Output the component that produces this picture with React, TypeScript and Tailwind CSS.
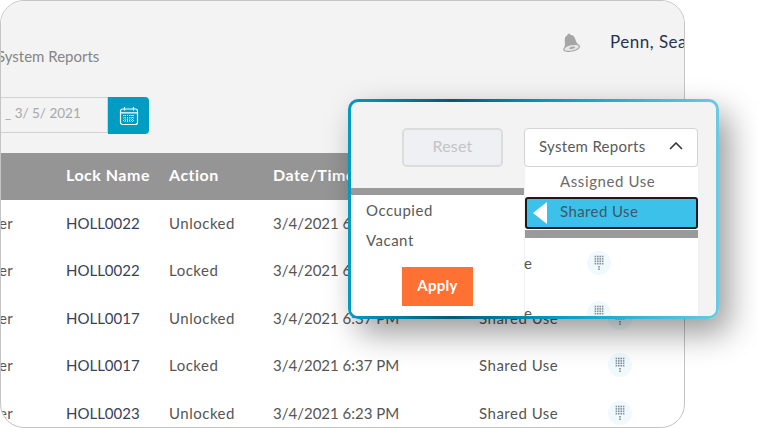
import React from "react";

const rows = [
  { lock: "HOLL0022", action: "Unlocked", time: "3/4/2021 6:41 PM" },
  { lock: "HOLL0022", action: "Locked", time: "3/4/2021 6:41 PM" },
  { lock: "HOLL0017", action: "Unlocked", time: "3/4/2021 6:37 PM" },
  { lock: "HOLL0017", action: "Locked", time: "3/4/2021 6:37 PM" },
  { lock: "HOLL0023", action: "Unlocked", time: "3/4/2021 6:23 PM" },
];

const Keypad = () => (
  <svg width="24" height="24" viewBox="0 0 24 24" className="shrink-0">
    <circle cx="12" cy="12" r="12" fill="#f0f9fe" />
    {[5.5, 7.9, 10.3, 12.7].map((y) =>
      [8.4, 10.8, 13.2, 15.6].map((x) => (
        <rect key={`${x}-${y}`} x={x - 0.8} y={y - 0.8} width="1.6" height="1.6" fill="#87929b" />
      ))
    )}
    <rect x="11.2" y="15" width="1.6" height="1.6" fill="#87929b" />
    <rect x="11.2" y="17.4" width="1.6" height="1.6" fill="#87929b" />
  </svg>
);

const Bell = () => (
  <svg width="21" height="21" viewBox="0 0 21 21" className="rotate-[-12deg]">
    <path d="M10.5 1.5c.9 0 1.5.6 1.5 1.3 2.6.7 3.7 2.8 3.9 5.6.2 2.6.7 4.5 2.1 6.1H3c1.4-1.6 1.9-3.5 2.1-6.1.2-2.8 1.3-4.9 3.9-5.6 0-.7.6-1.3 1.5-1.3z" fill="#a5a5a5" />
    <ellipse cx="10.5" cy="16" rx="8" ry="3.2" fill="#e8e8e8" stroke="#a5a5a5" strokeWidth="1.2" />
    <ellipse cx="11" cy="16" rx="3" ry="1" fill="#a5a5a5" />
  </svg>
);

const Calendar = () => (
  <svg width="20" height="20" viewBox="0 0 20 20" fill="none" stroke="#fff" strokeWidth="1.2">
    <rect x="1.5" y="3" width="17" height="15.5" rx="2" />
    <path d="M1.5 6.8h17M5.5 1v3.5M14.5 1v3.5" />
    <path d="M4 9.5h12M4 12h12M4 14.5h12M6 9v7M8.5 9v7M11 9v7M13.5 9v7" strokeWidth="0.8" strokeDasharray="1 1" />
  </svg>
);

export default function App() {
  return (
    <div className="relative h-[428px] w-[757px] overflow-hidden bg-white font-['Lato','Noto_Sans',sans-serif]">
      <div className="h-[428px] w-[685px] overflow-hidden rounded-[24px] border border-[#c4c4c4] bg-white">
        <div className="bg-[#f3f3f3]">
          <div className="flex h-[96px] items-start">
            <span className="mt-[46px] ml-[-4px] w-[563px] shrink-0 text-[15px] leading-[18px] text-[#858585]">System Reports</span>
            <span className="mt-[31px] w-[50px] shrink-0"><Bell /></span>
            <span className="mt-[31px] whitespace-nowrap text-[17px] leading-[20px] tracking-[0.5px] text-[#28334f]">Penn, Sean</span>
          </div>
          <div className="flex h-[56px] items-start">
            <div className="flex h-[36px] w-[107px] items-center border border-l-0 border-[#d2d2d2] pb-[3px] pl-[4px] text-[13.5px] text-[#a8a8a8]">_ 3/ 5/ 2021</div>
            <div className="flex h-[37px] w-[41px] items-center justify-center rounded-r-[4px] bg-[#019cc2]"><Calendar /></div>
          </div>
        </div>
        <div className="flex h-[47px] items-center bg-[#959595] pb-[3px] text-[16px] font-bold tracking-[0.5px] text-white">
          <span className="ml-[65px] w-[103px]">Lock Name</span>
          <span className="w-[104px]">Action</span>
          <span>Date/Time</span>
        </div>
        {rows.map((r, i) => (
          <div key={i} className="flex h-[47.5px] items-center pb-[2px] text-[15px] text-[#555]">
            <span className="ml-[-2px] w-[67px] tracking-[0.4px]">er</span>
            <span className="w-[103px] text-[#39415a]">{r.lock}</span>
            <span className="w-[104px] tracking-[0.5px]">{r.action}</span>
            <span className="w-[206px]">{r.time}</span>
            <span className="w-[129px] tracking-[0.5px]">Shared Use</span>
            <Keypad />
          </div>
        ))}
      </div>

      <div className="absolute top-[99px] left-[348px] h-[220px] w-[371px] overflow-hidden rounded-[10px] bg-[linear-gradient(90deg,#019cc2_0%,#045a75_28%,#019cc2_55%,#6cc9e2_100%)] p-[3px] shadow-[10px_14px_32px_rgba(0,0,0,0.4)]">
        <div className="flex h-full overflow-hidden rounded-[7px] bg-[#f3f3f3]">
          <div className="w-[173px] shrink-0">
            <div className="mt-[26px] ml-[51px] flex h-[39px] w-[101px] items-center justify-center rounded-[5px] border-2 border-[#dcdcdc] bg-[#eef0f3] pb-[3px] text-[16px] tracking-[0.2px] text-[#c4c4c4]">Reset</div>
            <div className="mt-[21px] h-[8px] bg-[#9a9a9a]"></div>
            <div className="h-[200px] bg-white pl-[15px] text-[15px] tracking-[0.5px] text-[#5a5a5a]">
              <div className="-mt-px leading-[30px]">Occupied</div>
              <div className="leading-[30px]">Vacant</div>
              <div className="mt-[12px] ml-[36px] flex h-[39px] w-[71px] items-center justify-center bg-[#ff7033] pb-[3px] font-bold tracking-[0.3px] text-white">Apply</div>
            </div>
          </div>
          <div className="w-[174px] shrink-0">
            <div className="mt-[26px] flex h-[39px] items-center justify-between rounded-[4px] border border-[#d4d4d4] bg-white px-[14px] pb-[3px] text-[15px] tracking-[0.3px] text-[#5a5a5a]">
              <span>System Reports</span>
              <svg width="14" height="8" viewBox="0 0 14 8" fill="none" stroke="#333" strokeWidth="1.5"><path d="M1 7l6-6 6 6" /></svg>
            </div>
            <div className="ml-px bg-white">
              <div className="flex h-[30px] items-center pb-[2px] pl-[35px] text-[15px] tracking-[0.6px] text-[#6a6a6a]">Assigned Use</div>
              <div className="relative flex h-[32px] items-center rounded-[3px] border-2 border-[#1b1b1b] bg-[#3cc1ea] pb-[3px] pl-[33px] text-[15px] tracking-[0.4px] text-[#3f5866]">
                <span className="absolute top-[3px] left-[6px] h-0 w-0 border-y-[11px] border-r-[14px] border-y-transparent border-r-white"></span>
                Shared Use
              </div>
              <div className="mt-px h-[8px] bg-[#9a9a9a]"></div>
              <div className="flex h-[50px] items-center text-[15px] text-[#555]">
                <span className="ml-[-1px] w-[63px] shrink-0">e</span><Keypad />
              </div>
              <div className="flex h-[50px] items-center text-[15px] text-[#555]">
                <span className="ml-[-1px] w-[63px] shrink-0">e</span><Keypad />
              </div>
            </div>
          </div>
        </div>
      </div>
    </div>
  );
}
